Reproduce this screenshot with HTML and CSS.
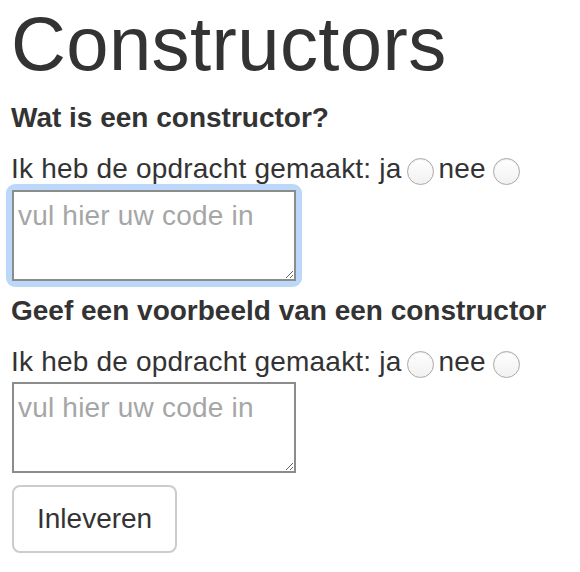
FILE: index.html
```html
<!DOCTYPE html>
<html lang="nl">
<head>
<meta charset="utf-8">
<title>Constructors</title>
<link rel="stylesheet" href="styles.css">
</head>
<body>
<main class="page">
  <h1 class="title">Constructors</h1>
  <form class="form">
    <div class="question">
      <label class="label">Wat is een constructor?</label>
      <div class="done">Ik heb de opdracht gemaakt: ja<input class="radio radio-ja" type="radio" name="q1">nee<input class="radio radio-nee" type="radio" name="q1"></div>
      <div class="focus-ring"><textarea class="code" placeholder="vul hier uw code in"></textarea></div>
    </div>
    <div class="question">
      <label class="label">Geef een voorbeeld van een constructor</label>
      <div class="done">Ik heb de opdracht gemaakt: ja<input class="radio radio-ja" type="radio" name="q2">nee<input class="radio radio-nee" type="radio" name="q2"></div>
      <textarea class="code" placeholder="vul hier uw code in"></textarea>
    </div>
    <button class="btn" type="button">Inleveren</button>
  </form>
</main>
</body>
</html>
```

FILE: styles.css
```css
html, body {
  margin: 0;
  padding: 0;
  background: #fff;
}

body {
  font-family: "Liberation Sans", Arial, Helvetica, sans-serif;
  font-size: 28px;
  line-height: 40px;
  color: #333;
}

.page {
  padding: 2px 12px 0 11px;
}

.title {
  font-size: 76px;
  line-height: 1.1;
  font-weight: 400;
  letter-spacing: 0.4px;
  margin: 0 0 12px 0;
  color: #333;
}

.form {
  display: flex;
  flex-direction: column;
  align-items: flex-start;
}

.question {
  display: flex;
  flex-direction: column;
  align-items: flex-start;
  margin-bottom: 10px;
}

.label {
  display: block;
  font-weight: 700;
  margin-bottom: 11px;
}

.done {
  white-space: nowrap;
  letter-spacing: 0.2px;
}

.radio {
  -webkit-appearance: none;
  appearance: none;
  box-sizing: border-box;
  width: 27px;
  height: 27px;
  border-radius: 50%;
  border: 1px solid #a9a9a9;
  background: linear-gradient(#ffffff, #f1f1f1);
  box-shadow: inset 0 1px 1px rgba(0,0,0,0.08);
  vertical-align: -7px;
  padding: 0;
}

.radio-ja {
  margin: 0 4px 0 6px;
}

.radio-nee {
  margin: 0 0 0 7px;
}

.focus-ring {
  padding: 6px;
  margin: -5px 0 -6px -5px;
  border-radius: 9px;
  background: #bcd8f9;
}

.code {
  display: block;
  box-sizing: border-box;
  width: 284px;
  height: 91px;
  margin: 0 0 0 1px;
  padding: 4px;
  border: 2px solid #8c8c8c;
  border-radius: 0;
  font-family: "Liberation Sans", Arial, Helvetica, sans-serif;
  font-size: 28px;
  line-height: 40px;
  letter-spacing: 0.2px;
  color: #333;
  background: #fff;
  resize: vertical;
}

.focus-ring .code {
  margin: 0;
}

.code::placeholder {
  color: #a6a6a6;
  opacity: 1;
}

.btn {
  margin: 2px 0 0 1px;
  padding: 12px 23px;
  font-family: "Liberation Sans", Arial, Helvetica, sans-serif;
  font-size: 28px;
  line-height: 40px;
  color: #333;
  background: #fff;
  border: 2px solid #cccccc;
  border-radius: 8px;
}
```
